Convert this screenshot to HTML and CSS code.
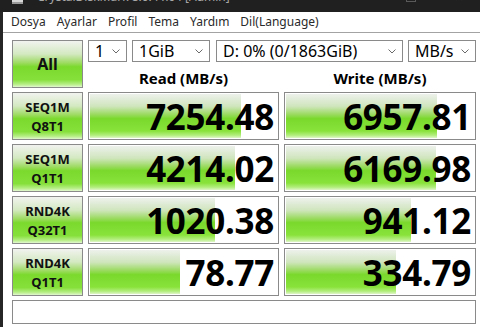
FILE: index.html
```html
<!DOCTYPE html>
<html lang="tr">

<head>
    <meta charset="UTF-8">
    <title>CrystalDiskMark 8.0.4 x64 [Admin]</title>
    <link rel="stylesheet" href="styles.css">
</head>

<body>

    <div class="window">
        <!-- Title bar, mostly cut off at the top -->
        <div class="titlebar">
            <span class="app-icon"></span>
            <span class="title">CrystalDiskMark 8.0.4 x64 [Admin]</span>
            <span class="win-btn max"></span>
            <span class="win-btn close">&#x2715;</span>
        </div>

        <div class="frame">
            <ul class="menu">
                <li>Dosya</li>
                <li>Ayarlar</li>
                <li>Profil</li>
                <li>Tema</li>
                <li>Yardım</li>
                <li>Dil(Language)</li>
            </ul>

            <div class="bench">
                <div class="btn all">All</div>

                <div class="selects">
                    <div class="select count">1<svg class="chev" width="8" height="5" viewBox="0 0 8 5"><polyline points="0.5,0.5 4,4 7.5,0.5" /></svg></div>
                    <div class="select size">1GiB<svg class="chev" width="8" height="5" viewBox="0 0 8 5"><polyline points="0.5,0.5 4,4 7.5,0.5" /></svg></div>
                    <div class="select drive">D: 0% (0/1863GiB)<svg class="chev" width="8" height="5" viewBox="0 0 8 5"><polyline points="0.5,0.5 4,4 7.5,0.5" /></svg></div>
                    <div class="select unit">MB/s<svg class="chev" width="8" height="5" viewBox="0 0 8 5"><polyline points="0.5,0.5 4,4 7.5,0.5" /></svg></div>
                </div>

                <div class="col-head read-head">Read (MB/s)</div>
                <div class="col-head write-head">Write (MB/s)</div>

                <div class="btn test">SEQ1M<br>Q8T1</div>
                <div class="result"><div class="fill" style="width: 81%"></div><span class="num">7254.48</span></div>
                <div class="result"><div class="fill" style="width: 80.5%"></div><span class="num">6957.81</span></div>

                <div class="btn test">SEQ1M<br>Q1T1</div>
                <div class="result"><div class="fill" style="width: 77.4%"></div><span class="num">4214.02</span></div>
                <div class="result"><div class="fill" style="width: 80%"></div><span class="num">6169.98</span></div>

                <div class="btn test">RND4K<br>Q32T1</div>
                <div class="result"><div class="fill" style="width: 67%"></div><span class="num">1020.38</span></div>
                <div class="result"><div class="fill" style="width: 66.3%"></div><span class="num">941.12</span></div>

                <div class="btn test">RND4K<br>Q1T1</div>
                <div class="result"><div class="fill" style="width: 48%"></div><span class="num">78.77</span></div>
                <div class="result"><div class="fill" style="width: 58.4%"></div><span class="num">334.79</span></div>

                <div class="status"></div>
            </div>
        </div>
    </div>

</body>

</html>
```

FILE: styles.css
```css
* {
    margin: 0;
    padding: 0;
    box-sizing: border-box;
}

body {
    font-family: 'Noto Sans', 'Open Sans', sans-serif;
    background-color: #ffffff;
    color: #000;
    width: 480px;
    height: 327px;
    overflow: hidden;
}

.window {
    display: flex;
    flex-direction: column;
    height: 327px;
}

/* Title bar */
.titlebar {
    height: 12px;
    background-color: #202020;
    display: flex;
    align-items: flex-start;
    overflow: hidden;
    flex-shrink: 0;
}

.app-icon {
    width: 11px;
    height: 10px;
    margin: -6px 0 0 12px;
    background-color: #d8d8d8;
    border-bottom: 2px solid #9a9a9a;
}

.title {
    font-size: 12px;
    line-height: 16px;
    color: #a8a8a8;
    margin: -11px 0 0 14px;
    white-space: nowrap;
}

.win-btn.max {
    width: 10px;
    height: 10px;
    border: 1px solid #5a5a5a;
    margin: -8px 0 0 auto;
}

.win-btn.close {
    font-size: 12px;
    line-height: 14px;
    color: #9a9a9a;
    margin: -10px 16px 0 38px;
}

/* Client area */
.frame {
    flex: 1;
    display: flex;
    flex-direction: column;
    border-left: 3px solid #262626;
}

.menu {
    list-style: none;
    display: flex;
    height: 21px;
    padding-left: 8px;
    gap: 11px;
    border-bottom: 1px solid #a3a3a3;
    font-size: 12px;
    line-height: 20px;
    color: #2a2a2a;
}

.bench {
    display: grid;
    grid-template-columns: 71px 191px 192px;
    grid-template-rows: 22px 22px repeat(4, 48px) 24px;
    gap: 4px 5px;
    padding: 7px 0 0 9px;
}

.btn {
    border: 1px solid #8a8a8a;
    background: linear-gradient(#f1f3ef 0%, #d4e9c2 28%, #a2dc6a 46%, #7bd92d 56%, #86e03a 84%, #b6ee85 94%, #e2f7cf 100%);
    display: flex;
    align-items: center;
    justify-content: center;
    text-align: center;
    font-weight: 700;
    color: #111;
}

.all {
    grid-column: 1;
    grid-row: 1 / span 2;
    font-size: 16px;
}

.test {
    font-size: 13px;
    line-height: 19px;
    padding-top: 1px;
}

.selects {
    grid-column: 2 / span 2;
    grid-row: 1;
    display: flex;
}

.select {
    border: 1px solid #8a8a8a;
    display: flex;
    align-items: center;
    font-size: 16px;
    padding-left: 6px;
    padding-right: 6px;
    white-space: nowrap;
}

.select .chev {
    margin-left: auto;
    fill: none;
    stroke: #6a6a6a;
    stroke-width: 1;
}

.count { width: 39px; }
.size { width: 78px; margin-left: 5px; }
.drive { width: 187px; margin-left: 6px; }
.unit { width: 68px; margin-left: 5px; }

.col-head {
    grid-row: 2;
    font-size: 15px;
    font-weight: 700;
    text-align: center;
    align-self: end;
    line-height: 20px;
}

.read-head { grid-column: 2; }
.write-head { grid-column: 3; }

.result {
    border: 1px solid #8a8a8a;
    background-color: #ffffff;
    padding: 1px;
    display: grid;
}

.fill {
    grid-area: 1 / 1;
    height: 100%;
    background: linear-gradient(#eef1ec 0%, #cfe5bc 28%, #9cdb62 46%, #7ad82c 56%, #88e23a 84%, #b4ee80 94%, #dff6c8 100%);
}

.num {
    grid-area: 1 / 1;
    justify-self: end;
    align-self: center;
    font-size: 35px;
    font-weight: 700;
    line-height: 1;
    padding-right: 3px;
    letter-spacing: -0.3px;
}

.status {
    grid-column: 1 / -1;
    border: 1px solid #8a8a8a;
}
```
